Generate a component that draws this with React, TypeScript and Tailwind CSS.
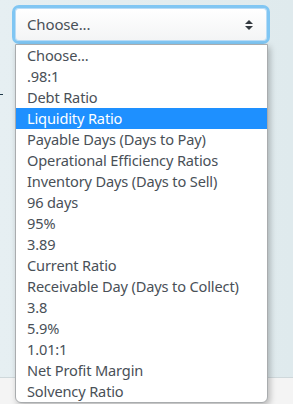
const OPTIONS = [
  "Choose...",
  ".98:1",
  "Debt Ratio",
  "Liquidity Ratio",
  "Payable Days (Days to Pay)",
  "Operational Efficiency Ratios",
  "Inventory Days (Days to Sell)",
  "96 days",
  "95%",
  "3.89",
  "Current Ratio",
  "Receivable Day (Days to Collect)",
  "3.8",
  "5.9%",
  "1.01:1",
  "Net Profit Margin",
  "Solvency Ratio",
];

const SELECTED = "Liquidity Ratio";

function Arrows() {
  return (
    <svg width="10" height="12" viewBox="0 0 10 12" className="text-[#343a40]">
      <path d="M5 1 9 5H1Z" fill="currentColor" />
      <path d="M5 11 9 7H1Z" fill="currentColor" />
    </svg>
  );
}

export default function App() {
  return (
    <div
      className="relative flex h-[404px] w-[293px] flex-col overflow-hidden bg-[#e3edf0] text-[14.6px] tracking-[-0.15px]"
      style={{ fontFamily: "'Noto Sans', 'Open Sans', sans-serif" }}
    >
      <div className="flex-1 bg-gradient-to-r from-[#e6eff2] to-[#dfeaed]">
        <div className="pl-[12px] pt-[5px] pr-[23px]">
          <div className="flex h-[39px] items-center justify-between rounded-[7px] border-[3px] border-[#80c6f3] bg-gradient-to-b from-white to-[#f3f4f5] pl-[12px] pr-[13px] shadow-[inset_0_0_0_1px_#b9dcf6]">
            <span className="text-[15px] text-[#495057]">Choose...</span>
            <Arrows />
          </div>
        </div>
        <div className="ml-0 mt-[50px] h-[1px] w-[3px] bg-[#1f3a4a]" />
      </div>
      <div className="h-[27px] border-t border-[#cfd8db] bg-[#f4f4f4]" />

      <ul className="absolute left-[15px] top-[44px] w-[253px] overflow-hidden rounded-b-[6px] border border-[#a9acae] bg-white py-0 shadow-[2px_3px_6px_rgba(0,0,0,0.25)]">
        {OPTIONS.map((opt) => (
          <li
            key={opt}
            className={
              "h-[21px] truncate pl-[11px] leading-[21px] " +
              (opt === SELECTED ? "bg-[#1e90ff] text-white" : "text-[#495057]")
            }
          >
            {opt}
          </li>
        ))}
      </ul>
    </div>
  );
}
